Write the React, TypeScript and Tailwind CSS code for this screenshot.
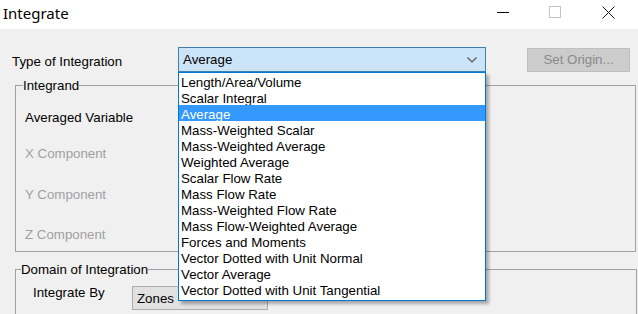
import React from "react";

const items = [
  "Length/Area/Volume",
  "Scalar Integral",
  "Average",
  "Mass-Weighted Scalar",
  "Mass-Weighted Average",
  "Weighted Average",
  "Scalar Flow Rate",
  "Mass Flow Rate",
  "Mass-Weighted Flow Rate",
  "Mass Flow-Weighted Average",
  "Forces and Moments",
  "Vector Dotted with Unit Normal",
  "Vector Average",
  "Vector Dotted with Unit Tangential",
];

export default function App() {
  return (
    <div
      className="relative w-[638px] h-[314px] overflow-hidden bg-[#f0f0f0] text-black text-[13.3px]"
      style={{ fontFamily: '"Liberation Sans", Arial, sans-serif' }}
    >
      {/* Title bar */}
      <div className="h-[29px] bg-white flex items-center">
        <div
          className="pl-[3px] text-[15px] leading-none -mt-[3px]"
          style={{ fontFamily: '"Noto Sans", "Open Sans", sans-serif' }}
        >
          Integrate
        </div>
        <div className="ml-auto flex items-center h-full">
          <div className="w-[46px] h-full flex items-center justify-center -mt-[5px]">
            <div className="w-[12px] h-[1px] bg-black mt-[1px]" />
          </div>
          <div className="w-[56px] h-full flex items-center justify-center -mt-[5px] pl-[2px]">
            <div className="w-[12px] h-[12px] border border-[#c4c4c4]" />
          </div>
          <div className="w-[56px] h-full flex items-center justify-center -mt-[5px] pr-[4px]">
            <svg width="13" height="13" viewBox="0 0 13 13">
              <path d="M0.5 0.5 L12.5 12.5 M12.5 0.5 L0.5 12.5" stroke="#111" strokeWidth="1" />
            </svg>
          </div>
        </div>
      </div>

      {/* Body */}
      <div className="pt-[18px]">
        <div className="flex items-center h-[25px]">
          <div className="w-[178px] pl-[12px] pt-[5px]">Type of Integration</div>
          <div className="w-[308px] h-[25px] bg-[#cce4f7] border border-[#3c7fb1] flex items-center pl-[4px] pr-[8px] pt-[1px]">
            <span>Average</span>
            <svg className="ml-auto" width="10" height="6" viewBox="0 0 10 6">
              <path d="M0.5 0.5 L5 5 L9.5 0.5" stroke="#555" strokeWidth="1.2" fill="none" />
            </svg>
          </div>
          <div className="ml-[41px] w-[103px] h-[24px] bg-[#cccccc] border border-[#bfbfbf] flex items-center justify-center text-[#8a8a8a] pt-[1px]">
            Set Origin...
          </div>
        </div>

        {/* Integrand group */}
        <fieldset className="ml-[15px] mt-[6px] w-[621px] h-[174px] border border-[#a0a0a0] pl-[7px]">
          <legend className="leading-[15px] px-0">Integrand</legend>
          <div className="flex flex-col pl-[2px]">
            <div className="h-[16px] leading-[16px] mt-[17px]">Averaged Variable</div>
            <div className="h-[16px] leading-[16px] mt-[20px] text-[#a0a0a0]">X Component</div>
            <div className="h-[16px] leading-[16px] mt-[25px] text-[#a0a0a0]">Y Component</div>
            <div className="h-[16px] leading-[16px] mt-[24px] text-[#a0a0a0]">Z Component</div>
          </div>
        </fieldset>

        {/* Domain group */}
        <fieldset className="ml-[15px] mt-[10px] w-[622px] h-[80px] border border-[#a0a0a0] pl-[5px]">
          <legend className="leading-[15px] px-0">Domain of Integration</legend>
          <div className="flex items-start mt-[9px] pl-[12px]">
            <div className="w-[99px] h-[16px] leading-[16px] -mt-[1px]">Integrate By</div>
            <div className="w-[136px] h-[24px] bg-[#e1e1e1] border border-[#adadad] flex items-center pl-[4px] pt-[1px]">
              Zones
            </div>
          </div>
        </fieldset>
      </div>

      {/* Open dropdown list */}
      <div className="absolute left-[178px] top-[72px] w-[308px] h-[229px] bg-white border border-[#0078d7] shadow-[3px_3px_3px_rgba(0,0,0,0.3)] flex flex-col">
        {items.map((it) => (
          <div
            key={it}
            className={
              it === "Average"
                ? "h-[16px] shrink-0 pl-[2px] bg-[#3399ff] text-white"
                : "h-[16px] shrink-0 pl-[2px]"
            }
          >
            <div className="leading-[16px] pt-[2px] h-[16px] overflow-visible whitespace-nowrap">{it}</div>
          </div>
        ))}
      </div>
    </div>
  );
}
